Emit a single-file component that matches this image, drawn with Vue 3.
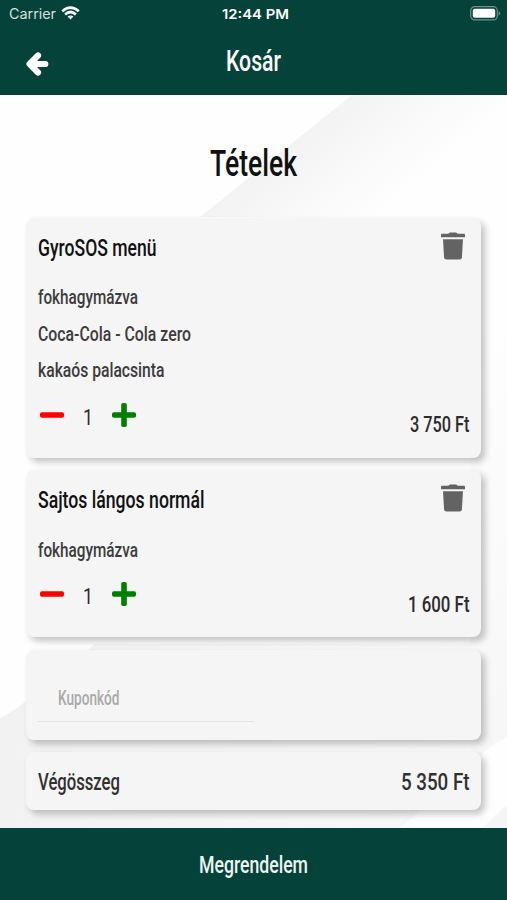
<script setup>
import { h } from 'vue'

// Single line of condensed type: glyphs are fitted to the given width.
const FitText = ({ text, width, size, height }) =>
  h('svg', { class: 'fit', width, height, style: { overflow: 'visible', display: 'block', flexShrink: 0 } }, [
    h('text', {
      x: 0,
      y: height / 2 + size * 0.355,
      'font-size': size,
      textLength: width,
      lengthAdjust: 'spacingAndGlyphs',
      fill: 'currentColor',
    }, text),
  ])
FitText.props = ['text', 'width', 'size', 'height']

const items = [
  {
    name: 'GyroSOS menü', width: 118.5, price: '3 750 Ft', priceWidth: 59.5, quantity: 1,
    extras: [
      { text: 'fokhagymázva', width: 100 },
      { text: 'Coca-Cola - Cola zero', width: 153 },
      { text: 'kakaós palacsinta', width: 126.5 },
    ],
  },
  {
    name: 'Sajtos lángos normál', width: 166.5, price: '1 600 Ft', priceWidth: 61.5, quantity: 1,
    extras: [{ text: 'fokhagymázva', width: 100 }],
  },
]
</script>

<template>
  <div class="screen">
    <header class="header">
      <div class="status">
        <div class="carrier">
          <FitText text="Carrier" :width="47" :size="14" :height="28" />
          <svg class="wifi" width="19" height="14" viewBox="0 0 19 14">
            <g fill="none" stroke="#fff" stroke-width="2.7">
              <path d="M1.2 5.2Q9.5-2.1 17.8 5.2" />
              <path d="M4.1 8.4Q9.5 3.6 14.9 8.4" />
            </g>
            <path d="M6.6 10.6Q9.5 8.2 12.4 10.6L9.5 13.6Z" fill="#fff" />
          </svg>
        </div>
        <div class="clock"><FitText text="12:44 PM" :width="67" :size="13.6" :height="28" /></div>
        <svg class="battery" width="31" height="15" viewBox="0 0 31 15">
          <rect x=".7" y=".7" width="26.6" height="13.2" rx="4" fill="none" stroke="#6f9187" stroke-width="1.2" />
          <rect x="2.8" y="2.8" width="22.4" height="9" rx="2" fill="#fff" />
          <path d="M28.6 5Q31.8 7.3 28.6 9.7Z" fill="#6f9187" />
        </svg>
      </div>
      <div class="nav">
        <svg class="back" width="24" height="26" viewBox="0 0 24 26" fill="none" stroke="#fff">
          <path d="M6 13H20.3" stroke-linecap="round" stroke-width="6.2" />
          <path d="M13 4.5L4.6 13L13 21.5" stroke-linecap="round" stroke-linejoin="round" stroke-width="6.2" />
        </svg>
        <FitText text="Kosár" :width="55" :size="29.5" :height="44" />
      </div>
    </header>

    <main class="content">
      <svg class="backdrop" viewBox="0 0 507 733" preserveAspectRatio="none">
        <defs>
          <linearGradient id="fold" gradientUnits="userSpaceOnUse" x1="275" y1="60" x2="345" y2="145">
            <stop offset="0" stop-color="#f3f3f3" />
            <stop offset="1" stop-color="#fefefe" />
          </linearGradient>
          <linearGradient id="side" x1="0" y1="0" x2="0" y2="1">
            <stop offset="0" stop-color="#fefefe" />
            <stop offset="1" stop-color="#f5f5f5" />
          </linearGradient>
          <linearGradient id="floor" x1="0" y1="0" x2="1" y2="0">
            <stop offset="0" stop-color="#f2f2f2" />
            <stop offset="1" stop-color="#f8f8f8" />
          </linearGradient>
        </defs>
        <rect width="507" height="733" fill="#fefefe" />
        <path d="M352 0L200 122H507V0Z" fill="url(#fold)" />
        <path d="M470 230H507V733H470Z" fill="url(#side)" />
        <path d="M0 623Q14 616 26 606L95 549H470V733H0Z" fill="url(#floor)" />
        <path d="M507 642Q488 650 478 664L400 733H482L507 710Z" fill="#fefefe" />
      </svg>

      <h1 class="title"><FitText text="Tételek" :width="87" :size="37" :height="50" /></h1>

      <section v-for="item in items" :key="item.name" class="card item">
        <div class="item-head">
          <FitText :text="item.name" :width="item.width" :size="24.6" :height="59" />
          <svg class="trash" width="24" height="28" viewBox="0 0 24 28" fill="#636363">
            <path d="M.8 1.8H7.4Q8.2.4 9.4.4H14.6Q15.8.4 16.6 1.8H23.2Q24 1.8 24 2.7V5.3H0V2.7Q0 1.8.8 1.8Z" />
            <path d="M2 7.3H22L20.9 25.5Q20.7 27.5 18.7 27.5H5.3Q3.3 27.5 3.1 25.5Z" />
          </svg>
        </div>
        <div class="extras">
          <FitText v-for="extra in item.extras" :key="extra.text" :text="extra.text" :width="extra.width" :size="21" :height="36.5" />
        </div>
        <div class="item-foot">
          <div class="stepper">
            <svg width="26" height="26" viewBox="0 0 26 26"><rect x="1" y="10.2" width="24" height="5.6" rx="1.8" fill="#fe0000" /></svg>
            <div class="quantity"><FitText :text="String(item.quantity)" :width="10" :size="21.5" :height="30" /></div>
            <svg width="26" height="26" viewBox="0 0 26 26" fill="#008000"><rect x="1" y="10.2" width="24" height="5.6" rx="1.8" /><rect x="10.2" y="1" width="5.6" height="24" rx="1.8" /></svg>
          </div>
          <div class="price"><FitText :text="item.price" :width="item.priceWidth" :size="22" :height="34" /></div>
        </div>
      </section>

      <section class="card coupon">
        <div class="field"><FitText text="Kuponkód" :width="61.5" :size="19.5" :height="46" /></div>
      </section>

      <section class="card total">
        <FitText text="Végösszeg" :width="82" :size="24.6" :height="58" />
        <FitText text="5 350 Ft" :width="68.5" :size="24.6" :height="58" />
      </section>
    </main>

    <footer class="order"><FitText text="Megrendelem" :width="109" :size="24.6" :height="72" /></footer>
  </div>
</template>

<style>
body {
  margin: 0;
}
</style>

<style scoped>
.screen {
  width: 507px;
  height: 900px;
  display: flex;
  flex-direction: column;
  overflow: hidden;
  font-family: Roboto, 'Liberation Sans', sans-serif;
  font-weight: 500;
}
.header {
  height: 94.5px;
  flex: none;
  background: #054239;
  color: #fff;
}
.status {
  height: 28px;
  display: grid;
  grid-template-columns: 1fr auto 1fr;
  align-items: center;
  padding: 0 6px 0 9px;
  font-family: Inter, sans-serif;
}
.carrier {
  display: flex;
  align-items: center;
  gap: 5px;
  color: #d5e0dd;
  font-weight: 400;
}
.wifi {
  margin-top: -2px;
}
.clock {
  font-weight: 600;
}
.battery {
  justify-self: end;
  margin-top: -1px;
}
.nav {
  display: grid;
  grid-template-columns: 1fr auto 1fr;
  align-items: center;
  padding: 11px 26px 0 25px;
  height: 44px;
}
.back {
  margin-top: 5px;
}
.content {
  position: relative;
  height: 733px;
  flex: none;
  box-sizing: border-box;
  padding: 0 26px;
  overflow: hidden;
  display: flex;
  flex-direction: column;
}
.backdrop {
  position: absolute;
  inset: 0;
  width: 100%;
  height: 100%;
}
.title {
  position: relative;
  display: flex;
  justify-content: center;
  margin: 0;
  padding: 43.5px 0 29.5px;
  color: #111;
  font-weight: 500;
}
.card {
  position: relative;
  box-sizing: border-box;
  border-radius: 8px;
  background: #f5f5f5;
  box-shadow: 4px 4px 7px rgba(0, 0, 0, 0.24);
  padding: 0 12px;
  margin-bottom: 12.5px;
  flex: none;
}
.item {
  padding-bottom: 15.5px;
}
.item-head {
  height: 60.5px;
  display: flex;
  justify-content: space-between;
  color: #111;
}
.trash {
  margin: 14px 4px 0 0;
}
.extras {
  color: #3c3c3c;
}
.item-foot {
  height: 54.5px;
  display: flex;
  justify-content: space-between;
  align-items: center;
  color: #2c2c2c;
}
.stepper {
  display: flex;
  align-items: center;
  gap: 18px;
  padding-left: 1px;
}
.quantity {
  padding-top: 4px;
  font-weight: 400;
}
.price {
  padding-top: 19px;
}
.coupon {
  height: 90px;
  padding-top: 25.5px;
}
.field {
  width: 216px;
  box-sizing: border-box;
  padding-left: 20px;
  border-bottom: 1px solid #e2e2e2;
  color: #a9a9a9;
}
.total {
  height: 58px;
  display: flex;
  justify-content: space-between;
  color: #303030;
}
.order {
  flex: 1;
  display: flex;
  justify-content: center;
  background: #054239;
  color: #eef5f3;
}
</style>
